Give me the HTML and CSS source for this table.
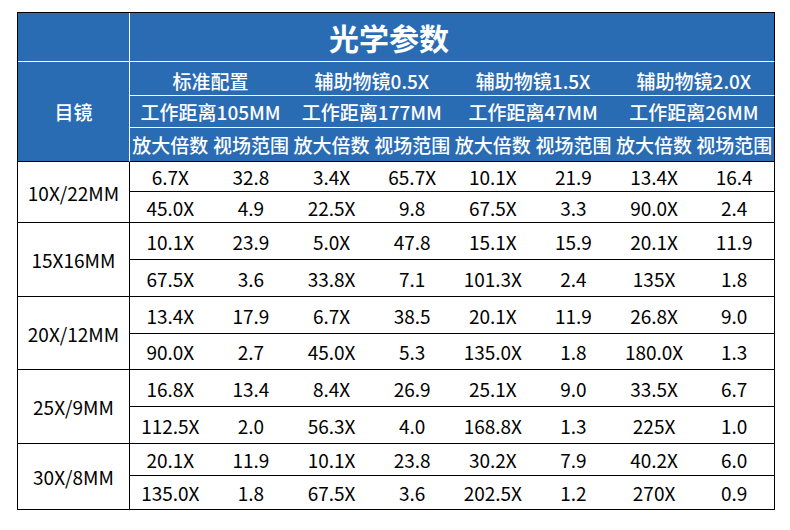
FILE: index.html
```html
<!DOCTYPE html>
<html lang="zh-CN">
<head>
<meta charset="utf-8">
<title>光学参数</title>
<link rel="stylesheet" href="styles.css">
</head>
<body>
<table class="spec">
  <colgroup>
    <col class="c-eye">
    <col><col><col><col><col><col><col><col>
  </colgroup>
  <thead>
    <tr class="r-title">
      <th class="eye-h"></th>
      <th colspan="8" class="title last">光学参数</th>
    </tr>
    <tr class="r-h1">
      <th rowspan="3" class="eye-h eye-label">目镜</th>
      <th colspan="2">标准配置</th>
      <th colspan="2">辅助物镜0.5X</th>
      <th colspan="2">辅助物镜1.5X</th>
      <th colspan="2" class="last">辅助物镜2.0X</th>
    </tr>
    <tr class="r-h2">
      <th colspan="2">工作距离105MM</th>
      <th colspan="2">工作距离177MM</th>
      <th colspan="2">工作距离47MM</th>
      <th colspan="2" class="last">工作距离26MM</th>
    </tr>
    <tr class="r-h3">
      <th>放大倍数</th><th>视场范围</th>
      <th>放大倍数</th><th>视场范围</th>
      <th>放大倍数</th><th>视场范围</th>
      <th>放大倍数</th><th class="last">视场范围</th>
    </tr>
  </thead>
  <tbody>
    <tr class="b1">
      <td rowspan="2" class="eye">10X/22MM</td>
      <td>6.7X</td><td>32.8</td><td>3.4X</td><td>65.7X</td><td>10.1X</td><td>21.9</td><td>13.4X</td><td class="last">16.4</td>
    </tr>
    <tr class="b2">
      <td>45.0X</td><td>4.9</td><td>22.5X</td><td>9.8</td><td>67.5X</td><td>3.3</td><td>90.0X</td><td class="last">2.4</td>
    </tr>
    <tr class="b3">
      <td rowspan="2" class="eye">15X16MM</td>
      <td>10.1X</td><td>23.9</td><td>5.0X</td><td>47.8</td><td>15.1X</td><td>15.9</td><td>20.1X</td><td class="last">11.9</td>
    </tr>
    <tr class="b4">
      <td>67.5X</td><td>3.6</td><td>33.8X</td><td>7.1</td><td>101.3X</td><td>2.4</td><td>135X</td><td class="last">1.8</td>
    </tr>
    <tr class="b5">
      <td rowspan="2" class="eye">20X/12MM</td>
      <td>13.4X</td><td>17.9</td><td>6.7X</td><td>38.5</td><td>20.1X</td><td>11.9</td><td>26.8X</td><td class="last">9.0</td>
    </tr>
    <tr class="b6">
      <td>90.0X</td><td>2.7</td><td>45.0X</td><td>5.3</td><td>135.0X</td><td>1.8</td><td>180.0X</td><td class="last">1.3</td>
    </tr>
    <tr class="b7">
      <td rowspan="2" class="eye">25X/9MM</td>
      <td>16.8X</td><td>13.4</td><td>8.4X</td><td>26.9</td><td>25.1X</td><td>9.0</td><td>33.5X</td><td class="last">6.7</td>
    </tr>
    <tr class="b8">
      <td>112.5X</td><td>2.0</td><td>56.3X</td><td>4.0</td><td>168.8X</td><td>1.3</td><td>225X</td><td class="last">1.0</td>
    </tr>
    <tr class="b9">
      <td rowspan="2" class="eye">30X/8MM</td>
      <td>20.1X</td><td>11.9</td><td>10.1X</td><td>23.8</td><td>30.2X</td><td>7.9</td><td>40.2X</td><td class="last">6.0</td>
    </tr>
    <tr class="b10">
      <td>135.0X</td><td>1.8</td><td>67.5X</td><td>3.6</td><td>202.5X</td><td>1.2</td><td>270X</td><td class="last">0.9</td>
    </tr>
  </tbody>
</table>
</body>
</html>
```

FILE: styles.css
```css
html, body {
  margin: 0;
  padding: 0;
  background: #ffffff;
}

body {
  padding: 12px 0 0 17px;
  font-family: "Noto Sans CJK SC", "Noto Sans", sans-serif;
}

.spec {
  width: 758px;
  table-layout: fixed;
  border-collapse: separate;
  border-spacing: 0;
  border-top: 1px solid #000;
  border-left: 1px solid #000;
}

.c-eye {
  width: 112px;
}

.spec th,
.spec td {
  box-sizing: border-box;
  padding: 0;
  text-align: center;
  vertical-align: middle;
  white-space: nowrap;
  overflow: visible;
}

/* header */
.spec thead th {
  background: #2a6cb4;
  color: #ffffff;
  font-weight: 500;
  font-size: 19px;
  border-bottom: 1px solid #ffffff;
}

.spec thead .r-h1 th {
  padding-top: 3px;
}

.spec thead th.eye-h {
  border-right: 1px solid #ffffff;
}

.spec thead th.last {
  border-right: 1px solid #000;
}

.spec thead .r-h3 th,
.spec thead th.eye-label {
  border-bottom: 1px solid #000;
}

.spec thead .r-h1 th.eye-label {
  padding-top: 0;
}

.spec th.title {
  font-size: 30px;
  font-weight: 700;
  text-align: left;
  padding-left: 199px;
}

.r-title { height: 49px; }
.r-h1 { height: 34px; }
.r-h2 { height: 32px; }
.r-h3 { height: 34px; }

/* body */
.spec td {
  color: #000;
  font-size: 19px;
  font-weight: 400;
  border-bottom: 1px solid #000;
}

.spec td.eye {
  border-right: 1px solid #000;
}

.spec td.last {
  border-right: 1px solid #000;
}

.b1 { height: 30px; }
.b2 { height: 31px; }
.b3 { height: 37px; }
.b4 { height: 37px; }
.b5 { height: 37px; }
.b6 { height: 36px; }
.b7 { height: 37px; }
.b8 { height: 37px; }
.b9 { height: 32px; }
.b10 { height: 34px; }
```
